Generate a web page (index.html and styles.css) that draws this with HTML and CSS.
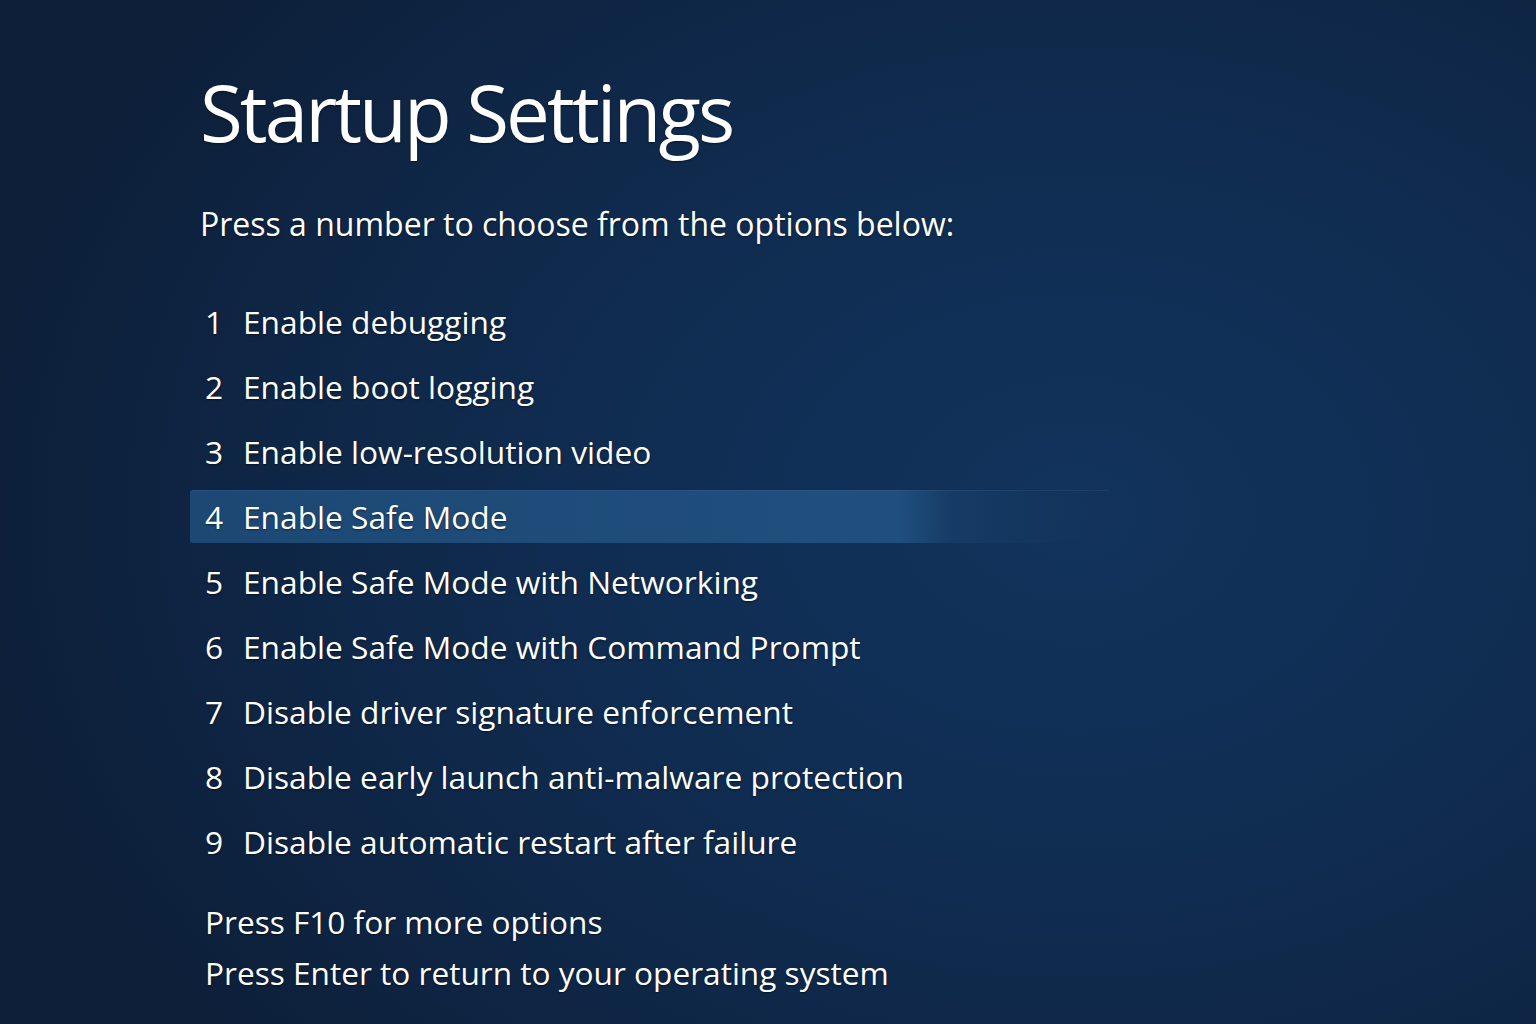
FILE: index.html
```html
<!DOCTYPE html>
<html lang="en">
<head>
    <meta charset="UTF-8">
    <meta name="viewport" content="width=device-width, initial-scale=1.0">
    <title>Startup Settings</title>
    <link rel="stylesheet" href="styles.css">
</head>
<body>

    <div class="screen">
        <h1 class="title">Startup Settings</h1>
        <p class="subtitle">Press a number to choose from the options below:</p>

        <!-- Opciones de arranque -->
        <ul class="options">
            <li class="option"><span class="num">1</span>Enable debugging</li>
            <li class="option"><span class="num">2</span>Enable boot logging</li>
            <li class="option"><span class="num">3</span>Enable low-resolution video</li>
            <li class="option selected"><span class="num">4</span>Enable Safe Mode</li>
            <li class="option"><span class="num">5</span>Enable Safe Mode with Networking</li>
            <li class="option"><span class="num">6</span>Enable Safe Mode with Command Prompt</li>
            <li class="option"><span class="num">7</span>Disable driver signature enforcement</li>
            <li class="option"><span class="num">8</span>Disable early launch anti-malware protection</li>
            <li class="option"><span class="num">9</span>Disable automatic restart after failure</li>
        </ul>

        <div class="footer">
            <p>Press F10 for more options</p>
            <p>Press Enter to return to your operating system</p>
        </div>
    </div>

</body>
</html>
```

FILE: styles.css
```css
* {
    margin: 0;
    padding: 0;
    box-sizing: border-box;
}

body {
    font-family: 'Open Sans', 'Noto Sans', sans-serif;
    color: #fff;
    height: 100vh;
    overflow: hidden;
    background-color: #0f2646;
    background-image:
        radial-gradient(ellipse 72% 80% at 70% 50%, #12335c 0%, #102e54 35%, #0f2849 65%, #0d1f39 100%);
}

.screen {
    padding: 57px 0 0 190px;
    text-shadow: 0 1px 2px rgba(0, 0, 0, 0.5);
}

.title {
    font-size: 78px;
    font-weight: 400;
    line-height: 110px;
    letter-spacing: -2.9px;
    padding-left: 10px;
}

.subtitle {
    font-size: 32px;
    line-height: 50px;
    margin-top: 32px;
    padding-left: 10px;
}

/* Lista de opciones */
.options {
    list-style: none;
    margin-top: 46px;
    display: flex;
    flex-direction: column;
    gap: 12px;
}

.option {
    display: flex;
    align-items: center;
    height: 53px;
    padding-left: 15px;
    font-size: 31.7px;
    width: 920px;
    border-radius: 3px;
}

.num {
    width: 38px;
}

.option.selected {
    background: linear-gradient(to right,
        #1d4874 0%,
        #204f7e 77%,
        rgba(32, 80, 127, 0.3) 83%,
        rgba(32, 80, 127, 0.1) 91%,
        rgba(32, 80, 127, 0) 100%);
    box-shadow: inset 0 1px 0 rgba(120, 170, 220, 0.1);
}

.footer {
    margin-top: 28px;
    padding-left: 15px;
    font-size: 31.6px;
    line-height: 51px;
}
```
